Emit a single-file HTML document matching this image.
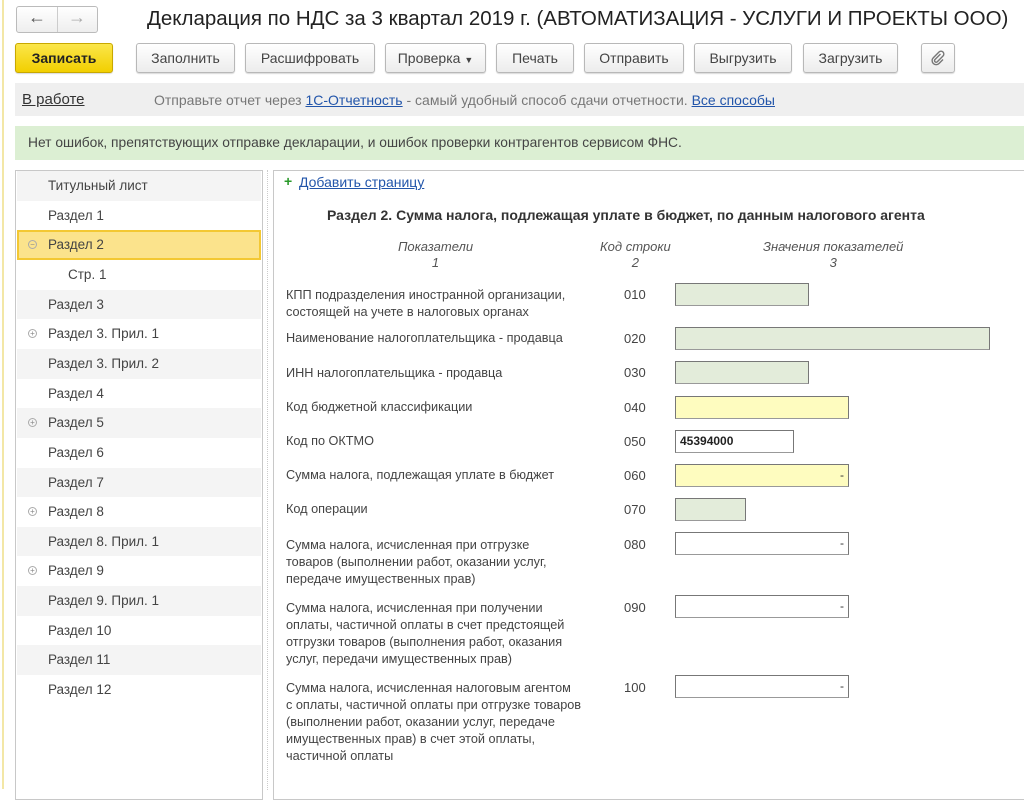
<!DOCTYPE html>
<html><head><meta charset="utf-8"><style>
*{box-sizing:border-box;margin:0;padding:0}
body{width:1024px;height:789px;overflow:hidden;background:#fff;font-family:"Liberation Sans",sans-serif;color:#333;position:relative;font-size:13px}
.a{position:absolute;white-space:nowrap}
.btn{position:absolute;top:43px;height:30px;border:1px solid #b8b8b8;border-radius:3px;background:linear-gradient(#fff,#ececec);box-shadow:0 1px 1px rgba(0,0,0,.15);text-align:center;line-height:28px;font-size:14px;color:#444}
.row{position:absolute;left:17px;width:244px;height:29.65px;line-height:29px;font-size:13.5px;color:#444;padding-left:31px}
.g{background:#f4f4f4}
.lbl{position:absolute;left:286px;font-size:12.7px;line-height:17px;color:#444}
.code{position:absolute;left:624px;font-size:13px;color:#444}
.f{position:absolute;left:675px;height:23px;border:1px solid #777;border-bottom-color:#999;font-size:12px;line-height:21px;padding:0 4px;text-align:right}
.gr{background:#e3ecda}.ye{background:#fefcbf}
.ic{position:absolute;left:28px;width:9px;height:9px;border:1px solid #aaa;border-radius:50%;top:10px;font-size:8px;line-height:7px;text-align:center;color:#888}
</style></head><body>
<div class="a" style="left:2px;top:0;width:2px;height:789px;background:#f3e7a6"></div>
<div class="a" style="left:16px;top:6px;width:82px;height:27px;border:1px solid #bbb;border-radius:3px;background:linear-gradient(#fff,#eee)"></div>
<div class="a" style="left:57px;top:7px;width:1px;height:25px;background:#ccc"></div>
<div class="a" style="left:28px;top:7px;font-size:18px;color:#555;font-weight:bold">&#8592;</div>
<div class="a" style="left:68px;top:7px;font-size:18px;color:#aaa;font-weight:bold">&#8594;</div>
<div class="a" style="left:147px;top:7px;font-size:20.5px;color:#222">Декларация по НДС за 3 квартал 2019 г. (АВТОМАТИЗАЦИЯ - УСЛУГИ И ПРОЕКТЫ ООО)</div>
<div class="btn" style="left:15px;width:98px;background:linear-gradient(#fbe64a,#f2cf00);border-color:#c8a800;font-weight:bold;color:#222">Записать</div>
<div class="btn" style="left:136px;width:99px">Заполнить</div>
<div class="btn" style="left:245px;width:130px">Расшифровать</div>
<div class="btn" style="left:385px;width:101px">Проверка <span style="font-size:9px">&#9660;</span></div>
<div class="btn" style="left:496px;width:78px">Печать</div>
<div class="btn" style="left:584px;width:100px">Отправить</div>
<div class="btn" style="left:694px;width:98px">Выгрузить</div>
<div class="btn" style="left:803px;width:95px">Загрузить</div>
<div class="btn" style="left:921px;width:34px"><svg width="16" height="16" viewBox="0 0 16 16" style="margin-top:6px"><path d="M10.5 4 L5 9.5 a1.6 1.6 0 0 0 2.3 2.3 L13 6 a2.8 2.8 0 0 0 -4 -4 L3.3 7.8 a4 4 0 0 0 5.7 5.7 L13 9.5" fill="none" stroke="#777" stroke-width="1.4"/></svg></div>
<div class="a" style="left:15px;top:83px;width:1009px;height:33px;background:#efefef"></div>
<div class="a" style="left:22px;top:91px;font-size:15px;color:#333;text-decoration:underline">В работе</div>
<div class="a" style="left:154px;top:92px;font-size:14px;color:#777">Отправьте отчет через <span style="color:#2255aa;text-decoration:underline">1С-Отчетность</span> - самый удобный способ сдачи отчетности. <span style="color:#2255aa;text-decoration:underline">Все способы</span></div>
<div class="a" style="left:15px;top:126px;width:1009px;height:34px;background:#dcefd3;font-size:13.8px;color:#444;line-height:34px;padding-left:13px">Нет ошибок, препятствующих отправке декларации, и ошибок проверки контрагентов сервисом ФНС.</div>
<div class="a" style="left:15px;top:170px;width:248px;height:630px;border:1px solid #c8c8c8"></div>
<div class="a" style="left:267px;top:170px;width:0;height:620px;border-left:1px dotted #ccc"></div>
<div class="row g" style="top:171px">Титульный лист</div>
<div class="row" style="top:200.6px">Раздел 1</div>
<div class="row" style="top:230.3px;background:#fbe38c;border:2px solid #f3c833;line-height:25px;padding-left:29px"><span class="ic" style="left:9px;top:8px">&#8722;</span>Раздел 2</div>
<div class="row" style="top:260px;padding-left:51px">Стр. 1</div>
<div class="row g" style="top:289.6px">Раздел 3</div>
<div class="row" style="top:319.2px"><span class="ic" style="left:11px">+</span>Раздел 3. Прил. 1</div>
<div class="row g" style="top:348.9px">Раздел 3. Прил. 2</div>
<div class="row" style="top:378.5px">Раздел 4</div>
<div class="row g" style="top:408.2px"><span class="ic" style="left:11px">+</span>Раздел 5</div>
<div class="row" style="top:437.8px">Раздел 6</div>
<div class="row g" style="top:467.5px">Раздел 7</div>
<div class="row" style="top:497.1px"><span class="ic" style="left:11px">+</span>Раздел 8</div>
<div class="row g" style="top:526.8px">Раздел 8. Прил. 1</div>
<div class="row" style="top:556.4px"><span class="ic" style="left:11px">+</span>Раздел 9</div>
<div class="row g" style="top:586.1px">Раздел 9. Прил. 1</div>
<div class="row" style="top:615.7px">Раздел 10</div>
<div class="row g" style="top:645.4px">Раздел 11</div>
<div class="row" style="top:675px">Раздел 12</div>
<div class="a" style="left:273px;top:170px;width:760px;height:630px;border:1px solid #c8c8c8"></div>
<div class="a" style="left:284px;top:173px;font-size:14px;color:#2a9a2a;font-weight:bold">+</div>
<div class="a" style="left:299px;top:174px;font-size:14px;color:#2255aa;text-decoration:underline">Добавить страницу</div>
<div class="a" style="left:327px;top:207px;font-size:14px;font-weight:bold;color:#333">Раздел 2. Сумма налога, подлежащая уплате в бюджет, по данным налогового агента</div>
<div class="a" style="left:398px;top:239px;font-size:13px;font-style:italic;color:#555;text-align:center;line-height:16px">Показатели<br>1</div>
<div class="a" style="left:600px;top:239px;font-size:13px;font-style:italic;color:#555;text-align:center;line-height:16px">Код строки<br>2</div>
<div class="a" style="left:763px;top:239px;font-size:13px;font-style:italic;color:#555;text-align:center;line-height:16px">Значения показателей<br>3</div>
<div class="lbl" style="top:287px">КПП подразделения иностранной организации,<br>состоящей на учете в налоговых органах</div>
<div class="code" style="top:287px">010</div><div class="f gr" style="top:283px;width:134px"></div>
<div class="lbl" style="top:330px">Наименование налогоплательщика - продавца</div>
<div class="code" style="top:331px">020</div><div class="f gr" style="top:327px;width:315px"></div>
<div class="lbl" style="top:365px">ИНН налогоплательщика - продавца</div>
<div class="code" style="top:365px">030</div><div class="f gr" style="top:361px;width:134px"></div>
<div class="lbl" style="top:399px">Код бюджетной классификации</div>
<div class="code" style="top:400px">040</div><div class="f ye" style="top:396px;width:174px"></div>
<div class="lbl" style="top:433px">Код по ОКТМО</div>
<div class="code" style="top:434px">050</div><div class="f" style="top:430px;width:119px;text-align:left;font-weight:bold;color:#222">45394000</div>
<div class="lbl" style="top:467px">Сумма налога, подлежащая уплате в бюджет</div>
<div class="code" style="top:468px">060</div><div class="f ye" style="top:464px;width:174px">-</div>
<div class="lbl" style="top:501px">Код операции</div>
<div class="code" style="top:502px">070</div><div class="f gr" style="top:498px;width:71px"></div>
<div class="lbl" style="top:537px">Сумма налога, исчисленная при отгрузке<br>товаров (выполнении работ, оказании услуг,<br>передаче имущественных прав)</div>
<div class="code" style="top:537px">080</div><div class="f" style="top:532px;width:174px">-</div>
<div class="lbl" style="top:600px">Сумма налога, исчисленная при получении<br>оплаты, частичной оплаты в счет предстоящей<br>отгрузки товаров (выполнения работ, оказания<br>услуг, передачи имущественных прав)</div>
<div class="code" style="top:600px">090</div><div class="f" style="top:595px;width:174px">-</div>
<div class="lbl" style="top:680px">Сумма налога, исчисленная налоговым агентом<br>с оплаты, частичной оплаты при отгрузке товаров<br>(выполнении работ, оказании услуг, передаче<br>имущественных прав) в счет этой оплаты,<br>частичной оплаты</div>
<div class="code" style="top:680px">100</div><div class="f" style="top:675px;width:174px">-</div>
</body></html>
